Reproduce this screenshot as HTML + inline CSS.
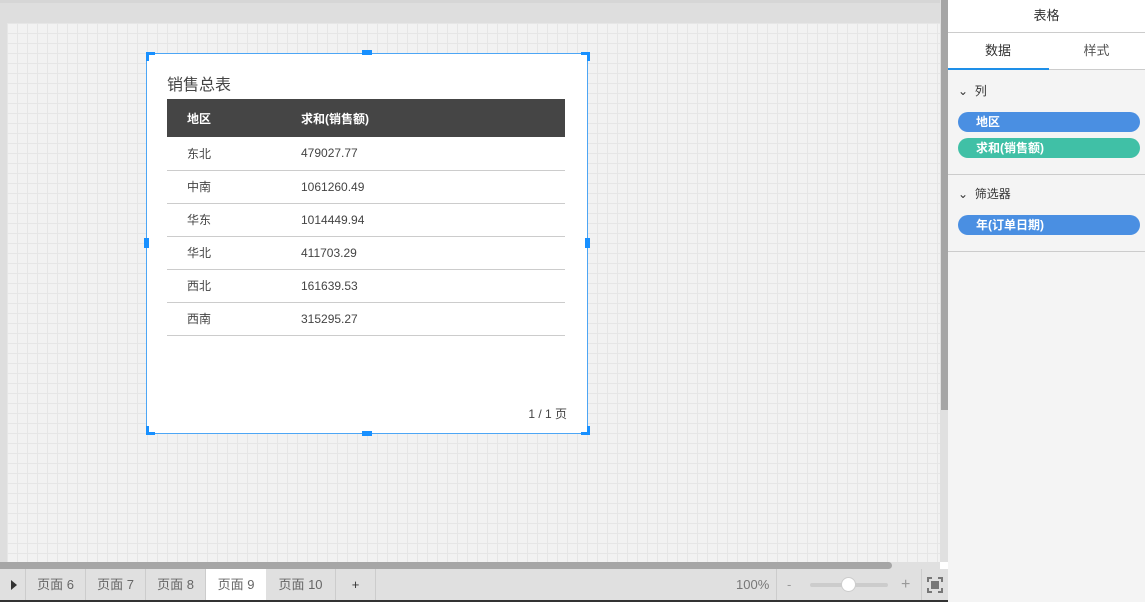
<!DOCTYPE html>
<html><head><meta charset="utf-8"><style>
*{margin:0;padding:0;box-sizing:border-box}
body{width:1145px;height:602px;overflow:hidden;background:#dedede;font-family:"Liberation Sans","Noto Sans CJK SC",sans-serif;position:relative;color:#333}
.abs{position:absolute}
#canvas{left:7px;top:23px;width:933px;height:539px;background-color:#f2f2f2;background-image:linear-gradient(#e6e6e6 1px,transparent 1px),linear-gradient(90deg,#e6e6e6 1px,transparent 1px);background-size:10px 10px;background-position:0 0,0 0}
#card{left:146px;top:53px;width:442px;height:381px;background:#fff;border:1px solid #4da6f5}
.h{background:#1890ff;position:absolute}
table{border-collapse:collapse;position:absolute;left:20px;top:45px;width:398px;font-size:12px}
th{background:#454545;color:#fff;text-align:left;height:38px;font-weight:bold;font-size:12px}
td{height:33px;border-bottom:1px solid #ccc;color:#444}
th:first-child,td:first-child{padding-left:20px;width:134px}
#panel{left:948px;top:0;width:197px;height:602px;background:#f4f4f4}
.pill{position:absolute;left:10px;width:182px;height:20px;border-radius:10px;color:#fff;font-size:12px;font-weight:bold;padding-left:18px;line-height:20px}
</style></head><body>
<div class="abs" style="left:0;top:0;width:948px;height:3px;background:#d6d6d6"></div>
<div class="abs" id="canvas"></div>
<div class="abs" id="card">
 <div class="abs" style="left:20px;top:17px;font-size:16px;color:#444">销售总表</div>
 <table>
 <tr><th>地区</th><th>求和(销售额)</th></tr>
 <tr><td>东北</td><td>479027.77</td></tr>
 <tr><td>中南</td><td>1061260.49</td></tr>
 <tr><td>华东</td><td>1014449.94</td></tr>
 <tr><td>华北</td><td>411703.29</td></tr>
 <tr><td>西北</td><td>161639.53</td></tr>
 <tr><td>西南</td><td>315295.27</td></tr>
 </table>
 <div class="abs" style="right:20px;top:351px;font-size:12px;color:#444">1 / 1 页</div>
</div>
<!-- handles -->
<div class="h" style="left:146px;top:52px;width:9px;height:3px"></div><div class="h" style="left:146px;top:52px;width:3px;height:9px"></div>
<div class="h" style="left:581px;top:52px;width:9px;height:3px"></div><div class="h" style="left:587px;top:52px;width:3px;height:9px"></div>
<div class="h" style="left:146px;top:432px;width:9px;height:3px"></div><div class="h" style="left:146px;top:426px;width:3px;height:9px"></div>
<div class="h" style="left:581px;top:432px;width:9px;height:3px"></div><div class="h" style="left:587px;top:426px;width:3px;height:9px"></div>
<div class="h" style="left:362px;top:50px;width:10px;height:5px"></div>
<div class="h" style="left:362px;top:431px;width:10px;height:5px"></div>
<div class="h" style="left:144px;top:238px;width:5px;height:10px"></div>
<div class="h" style="left:585px;top:238px;width:5px;height:10px"></div>
<!-- scrollbars -->
<div class="abs" style="left:940px;top:0;width:8px;height:569px;background:#e0e0e0"></div>
<div class="abs" style="left:941px;top:0;width:7px;height:410px;background:#a6a6a6"></div>
<div class="abs" style="left:0;top:562px;width:940px;height:7px;background:#e0e0e0"></div>
<div class="abs" style="left:0;top:562px;width:892px;height:7px;background:#a6a6a6;border-radius:0 4px 4px 0"></div>
<div class="abs" style="left:940px;top:562px;width:8px;height:7px;background:#fff"></div>
<!-- bottom bar -->
<div class="abs" style="left:0;top:569px;width:948px;height:31px;background:#e0e0e0;font-size:13px;color:#666">
 <div class="abs" style="left:11px;top:11px;width:0;height:0;border-left:6px solid #333;border-top:5px solid transparent;border-bottom:5px solid transparent"></div>
 <div class="abs" style="left:25px;top:0;width:1px;height:31px;background:#ccc"></div>
 <div class="abs" style="left:26px;top:0;width:60px;height:31px;text-align:center;line-height:31px;border-right:1px solid #ccc">页面 6</div>
 <div class="abs" style="left:86px;top:0;width:60px;height:31px;text-align:center;line-height:31px;border-right:1px solid #ccc">页面 7</div>
 <div class="abs" style="left:146px;top:0;width:60px;height:31px;text-align:center;line-height:31px;border-right:1px solid #ccc">页面 8</div>
 <div class="abs" style="left:206px;top:0;width:60px;height:31px;text-align:center;line-height:31px;background:#fff">页面 9</div>
 <div class="abs" style="left:266px;top:0;width:70px;height:31px;text-align:center;line-height:31px;border-right:1px solid #ccc">页面 10</div>
 <div class="abs" style="left:336px;top:0;width:40px;height:31px;text-align:center;line-height:31px;border-right:1px solid #ccc;color:#333">+</div>
 <div class="abs" style="left:736px;top:0;line-height:31px;color:#777">100%</div>
 <div class="abs" style="left:776px;top:0;width:1px;height:31px;background:#ccc"></div>
 <div class="abs" style="left:787px;top:0;line-height:31px;color:#999">-</div>
 <div class="abs" style="left:810px;top:14px;width:78px;height:4px;background:#ccc;border-radius:2px"></div>
 <div class="abs" style="left:841px;top:8px;width:15px;height:15px;background:#fff;border-radius:50%;border:1px solid #ccc"></div>
 <div class="abs" style="left:901px;top:0;line-height:31px;color:#999;font-size:16px">+</div>
 <div class="abs" style="left:921px;top:0;width:1px;height:31px;background:#ccc"></div>
 <div class="abs" style="left:927px;top:8px;width:16px;height:16px;border:2px solid #777"></div>
 <div class="abs" style="left:932px;top:6px;width:6px;height:20px;background:#e0e0e0"></div>
 <div class="abs" style="left:925px;top:13px;width:20px;height:6px;background:#e0e0e0"></div>
 <div class="abs" style="left:931px;top:12px;width:8px;height:8px;background:#777"></div>
</div>
<div class="abs" style="left:0;top:600px;width:1145px;height:2px;background:#333"></div>
<!-- panel -->
<div class="abs" id="panel">
 <div class="abs" style="left:0;top:0;width:197px;height:33px;background:#fff;border-bottom:1px solid #ccc;text-align:center;line-height:32px;font-size:13px">表格</div>
 <div class="abs" style="left:0;top:33px;width:197px;height:37px;background:#fff;border-bottom:1px solid #ccc;font-size:13px">
  <div class="abs" style="left:0;width:100px;text-align:center;line-height:36px">数据</div>
  <div class="abs" style="left:100px;width:97px;text-align:center;line-height:36px;color:#555">样式</div>
  <div class="abs" style="left:0;top:35px;width:101px;height:2px;background:#1e8fe8"></div>
 </div>
 <div class="abs" style="left:10px;top:82px;font-size:12px">⌄&nbsp; 列</div>
 <div class="pill" style="top:112px;background:#4a8fe2">地区</div>
 <div class="pill" style="top:138px;background:#40c0a6">求和(销售额)</div>
 <div class="abs" style="left:0;top:174px;width:197px;height:1px;background:#ccc"></div>
 <div class="abs" style="left:10px;top:185px;font-size:12px">⌄&nbsp; 筛选器</div>
 <div class="pill" style="top:215px;background:#4a8fe2">年(订单日期)</div>
 <div class="abs" style="left:0;top:251px;width:197px;height:1px;background:#ccc"></div>
</div>
</body></html>
